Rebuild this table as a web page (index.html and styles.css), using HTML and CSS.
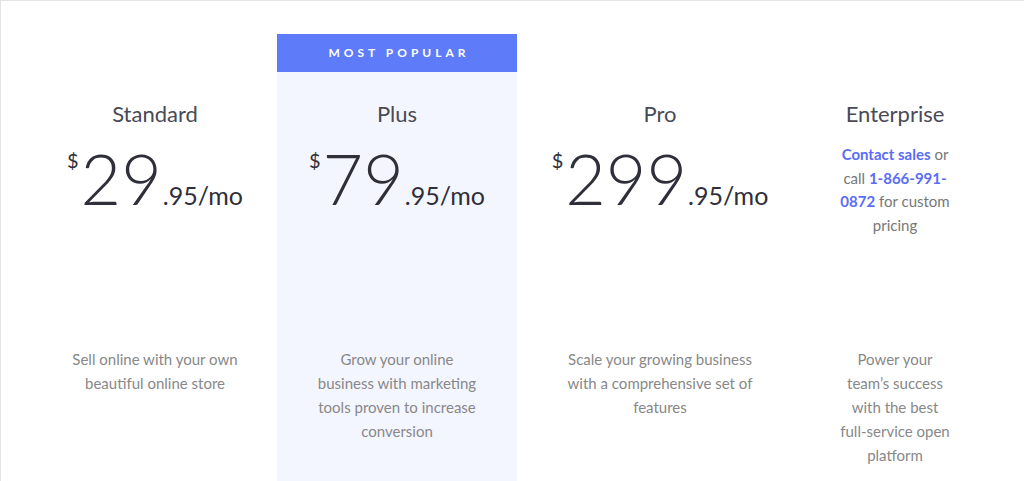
FILE: index.html
```html
<!DOCTYPE html>
<html lang="en">
<head>
  <meta charset="UTF-8">
  <meta name="viewport" content="width=device-width, initial-scale=1.0">
  <title>Pricing</title>
  <link rel="stylesheet" href="styles.css">
</head>
<body>
  <main class="plans">
    <!-- Standard -->
    <section class="plan plan-standard">
      <div class="plan-badge"></div>
      <div class="plan-body">
        <h2 class="plan-name">Standard</h2>
        <div class="plan-pricing">
          <div class="plan-price">
            <span class="currency">$</span><span class="amount">29</span><span class="cents">.95/mo</span>
          </div>
        </div>
        <p class="plan-desc">Sell online with your own beautiful online store</p>
      </div>
    </section>

    <!-- Plus -->
    <section class="plan plan-plus plan-popular">
      <div class="plan-badge">Most popular</div>
      <div class="plan-body">
        <h2 class="plan-name">Plus</h2>
        <div class="plan-pricing">
          <div class="plan-price">
            <span class="currency">$</span><span class="amount">79</span><span class="cents">.95/mo</span>
          </div>
        </div>
        <p class="plan-desc">Grow your online business with marketing tools proven to increase conversion</p>
      </div>
    </section>

    <!-- Pro -->
    <section class="plan plan-pro">
      <div class="plan-badge"></div>
      <div class="plan-body">
        <h2 class="plan-name">Pro</h2>
        <div class="plan-pricing">
          <div class="plan-price">
            <span class="currency">$</span><span class="amount">299</span><span class="cents">.95/mo</span>
          </div>
        </div>
        <p class="plan-desc">Scale your growing business with a comprehensive set of features</p>
      </div>
    </section>

    <!-- Enterprise -->
    <section class="plan plan-enterprise">
      <div class="plan-badge"></div>
      <div class="plan-body">
        <h2 class="plan-name">Enterprise</h2>
        <div class="plan-pricing">
          <p class="plan-contact"><a href="#">Contact sales</a> or call <a href="#">1-866-991-0872</a> for custom pricing</p>
        </div>
        <p class="plan-desc">Power your team’s success with the best full-service open platform</p>
      </div>
    </section>
  </main>
</body>
</html>
```

FILE: styles.css
```css
html, body {
  margin: 0;
  height: 100%;
}
body {
  font-family: Lato, "Open Sans", sans-serif;
  background-color: #fff;
  border-left: 1px solid #e4e4e4;
  border-top: 1px solid #e4e4e4;
  box-sizing: border-box;
  overflow: hidden;
}
.plans {
  display: flex;
  height: 100%;
  padding: 33px 0 0 34px;
  box-sizing: border-box;
}
.plan {
  width: 240px;
  display: flex;
  flex-direction: column;
}
.plan-plus {
  margin-left: 2px;
}
.plan-pro {
  margin-left: 23px;
}
.plan-enterprise {
  width: 130px;
  margin-left: 50px;
}
.plan-badge {
  height: 38px;
  flex-shrink: 0;
}
.plan-popular .plan-badge {
  background-color: #5e7cf9;
  color: #fff;
  font-size: 12px;
  font-weight: 700;
  letter-spacing: 4px;
  padding-left: 4px;
  text-transform: uppercase;
  text-align: center;
  line-height: 38px;
}
.plan-body {
  flex: 1;
  padding-top: 28px;
  text-align: center;
}
.plan-popular .plan-body {
  background-color: #f4f6ff;
}
.plan-name {
  margin: 0;
  font-size: 22px;
  font-weight: 400;
  line-height: 28px;
  color: #4a4a55;
}
.plan-pricing {
  height: 204px;
  margin-top: 15px;
}
.plan-price {
  display: flex;
  justify-content: center;
  align-items: baseline;
  color: #2f2f3b;
}
.currency {
  align-self: flex-start;
  font-size: 20px;
  line-height: 20px;
  margin-top: 7px;
  margin-right: 2px;
}
.amount {
  font-size: 70px;
  font-weight: 300;
  line-height: 70px;
}
.cents {
  font-size: 25px;
  margin-left: 1px;
}
.plan-contact {
  margin: 0 auto;
  width: 120px;
  font-size: 15px;
  line-height: 23.6px;
  color: #777;
}
.plan-contact a {
  color: #5b6cf5;
  font-weight: 700;
  text-decoration: none;
}
.plan-desc {
  margin: 0 auto;
  font-size: 15px;
  line-height: 24px;
  color: #888;
}
.plan-standard .plan-desc {
  max-width: 200px;
}
.plan-plus .plan-desc {
  max-width: 172px;
}
.plan-pro .plan-desc {
  max-width: 200px;
}
.plan-enterprise .plan-desc {
  max-width: 112px;
}
```
